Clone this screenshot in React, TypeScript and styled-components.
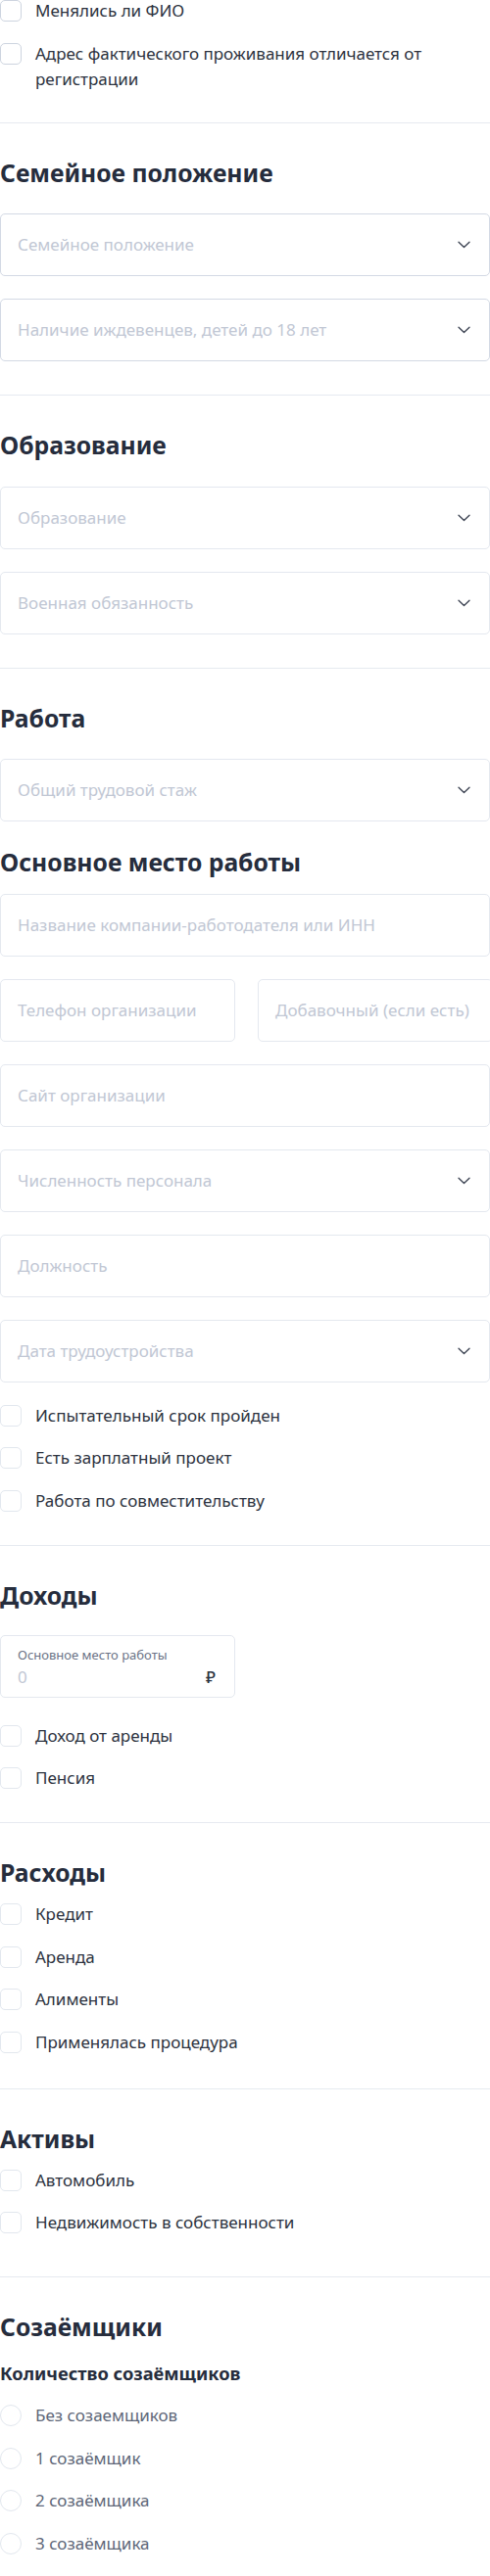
import React from 'react';
import styled, { createGlobalStyle, css } from 'styled-components';

const GlobalStyle = createGlobalStyle`
  html, body {
    margin: 0;
    padding: 0;
    background: #ffffff;
    overflow-x: hidden;
  }
  body {
    font-family: 'Noto Sans', 'Open Sans', Arial, sans-serif;
    color: #2d3340;
  }
  * {
    box-sizing: border-box;
  }
`;

const Page = styled.div`
  width: 500px;
  margin-top: -2px;
  padding-bottom: 20px;
`;

const Section = styled.section<{ $top?: number; $bottom?: number; $last?: boolean }>`
  padding-top: ${(p) => (p.$top ?? 35)}px;
  padding-bottom: ${(p) => (p.$bottom ?? 32)}px;
  border-bottom: ${(p) => (p.$last ? 'none' : '1px solid #e6eaf0')};
`;

const Title = styled.h2<{ $mb: number }>`
  margin: 0 0 ${(p) => p.$mb}px 0;
  font-size: 24.7px;
  line-height: 32px;
  font-weight: 700;
  color: #262d3d;
`;

const SubTitle = styled.h3<{ $mt?: number; $mb: number }>`
  margin: ${(p) => p.$mt ?? 0}px 0 ${(p) => p.$mb}px 0;
  font-size: ${(p) => (p.$mt ? 24.7 : 18.3)}px;
  line-height: ${(p) => (p.$mt ? 32 : 24)}px;
  font-weight: 700;
  color: #262d3d;
`;

const Fields = styled.div`
  display: flex;
  flex-direction: column;
  gap: 23px;
`;

const Pair = styled.div`
  display: grid;
  grid-template-columns: 240px 240px;
  column-gap: 23px;
`;

const Box = styled.div<{ $strong?: boolean; $width?: number }>`
  position: relative;
  height: 64px;
  width: ${(p) => (p.$width ? `${p.$width}px` : '100%')};
  border: 1px solid ${(p) => (p.$strong ? '#d3d9e4' : '#e4e8ef')};
  border-radius: 5px;
  background: #ffffff;
  display: flex;
  align-items: center;
  padding: 0 19px 0 17px;
`;

const Placeholder = styled.span`
  flex: 1;
  font-size: 17px;
  line-height: 22px;
  color: #c1c7d4;
  white-space: nowrap;
`;

const Chevron = () => (
  <svg width="13" height="8" viewBox="0 0 13 8" fill="none">
    <path d="M1 1.2L6.5 6.5L12 1.2" stroke="#3a4150" strokeWidth="1.3" strokeLinecap="round" strokeLinejoin="round" />
  </svg>
);

const MoneyBox = styled(Box)`
  flex-direction: column;
  align-items: stretch;
  justify-content: flex-start;
  padding-top: 10px;
  width: 240px;
`;

const MoneyLabel = styled.span`
  font-size: 13px;
  line-height: 18px;
  color: #6b7386;
`;

const MoneyRow = styled.div`
  display: flex;
  justify-content: space-between;
  align-items: center;
  margin-top: 3px;
  font-size: 17px;
  line-height: 22px;
`;

const MoneyValue = styled.span`
  color: #c1c7d4;
`;

const Currency = styled.span`
  color: #2d3340;
  font-weight: 500;
`;

const Checks = styled.div<{ $mt?: number }>`
  display: flex;
  flex-direction: column;
  gap: 17.5px;
  margin-top: ${(p) => p.$mt ?? 0}px;
`;

const CheckRow = styled.label`
  display: flex;
  align-items: flex-start;
  gap: 14px;
`;

const markBase = css`
  flex: 0 0 22px;
  width: 22px;
  height: 22px;
  margin-top: 2px;
  background: #ffffff;
`;

const Mark = styled.span<{ $strong?: boolean; $round?: boolean }>`
  ${markBase}
  border: 1px solid ${(p) => (p.$strong ? '#cdd4df' : '#e2e7ee')};
  border-radius: ${(p) => (p.$round ? '50%' : '5px')};
`;

const CheckText = styled.span<{ $muted?: boolean }>`
  font-size: 17px;
  line-height: 26px;
  color: ${(p) => (p.$muted ? '#5e6778' : '#2d3340')};
`;

type SelectProps = { label: string; strong?: boolean };

const Select = ({ label, strong }: SelectProps) => (
  <Box $strong={strong}>
    <Placeholder>{label}</Placeholder>
    <Chevron />
  </Box>
);

const Input = ({ label, width }: { label: string; width?: number }) => (
  <Box $width={width}>
    <Placeholder>{label}</Placeholder>
  </Box>
);

type CheckProps = { label: string; strong?: boolean; round?: boolean };

const Check = ({ label, strong, round }: CheckProps) => (
  <CheckRow>
    <Mark $strong={strong} $round={round} />
    <CheckText $muted={round}>{label}</CheckText>
  </CheckRow>
);

const App = () => {
  return (
    <>
      <GlobalStyle />
      <Page>
        <Section $top={0} $bottom={31}>
          <Checks>
            <Check strong label="Менялись ли ФИО" />
            <Check strong label="Адрес фактического проживания отличается от регистрации" />
          </Checks>
        </Section>

        <Section $bottom={34}>
          <Title $mb={25}>Семейное положение</Title>
          <Fields>
            <Select strong label="Семейное положение" />
            <Select strong label="Наличие иждевенцев, детей до 18 лет" />
          </Fields>
        </Section>

        <Section $bottom={34}>
          <Title $mb={26}>Образование</Title>
          <Fields>
            <Select label="Образование" />
            <Select label="Военная обязанность" />
          </Fields>
        </Section>

        <Section $bottom={32}>
          <Title $mb={25}>Работа</Title>
          <Fields>
            <Select label="Общий трудовой стаж" />
          </Fields>
          <SubTitle $mt={26} $mb={16}>
            Основное место работы
          </SubTitle>
          <Fields>
            <Input label="Название компании-работодателя или ИНН" />
            <Pair>
              <Input label="Телефон организации" />
              <Input label="Добавочный (если есть)" />
            </Pair>
            <Input label="Сайт организации" />
            <Select label="Численность персонала" />
            <Input label="Должность" />
            <Select label="Дата трудоустройства" />
          </Fields>
          <Checks $mt={21}>
            <Check label="Испытательный срок пройден" />
            <Check label="Есть зарплатный проект" />
            <Check label="Работа по совместительству" />
          </Checks>
        </Section>

        <Section $bottom={32}>
          <Title $mb={24}>Доходы</Title>
          <MoneyBox>
            <MoneyLabel>Основное место работы</MoneyLabel>
            <MoneyRow>
              <MoneyValue>0</MoneyValue>
              <Currency>₽</Currency>
            </MoneyRow>
          </MoneyBox>
          <Checks $mt={26}>
            <Check label="Доход от аренды" />
            <Check label="Пенсия" />
          </Checks>
        </Section>

        <Section $bottom={34}>
          <Title $mb={13}>Расходы</Title>
          <Checks>
            <Check label="Кредит" />
            <Check label="Аренда" />
            <Check label="Алименты" />
            <Check label="Применялась процедура" />
          </Checks>
        </Section>

        <Section $bottom={42}>
          <Title $mb={13}>Активы</Title>
          <Checks>
            <Check label="Автомобиль" />
            <Check label="Недвижимость в собственности" />
          </Checks>
        </Section>

        <Section $last>
          <Title $mb={19}>Созаёмщики</Title>
          <SubTitle $mb={18}>Количество созаёмщиков</SubTitle>
          <Checks>
            <Check round label="Без созаемщиков" />
            <Check round label="1 созаёмщик" />
            <Check round label="2 созаёмщика" />
            <Check round label="3 созаёмщика" />
          </Checks>
        </Section>
      </Page>
    </>
  );
};

export default App;
